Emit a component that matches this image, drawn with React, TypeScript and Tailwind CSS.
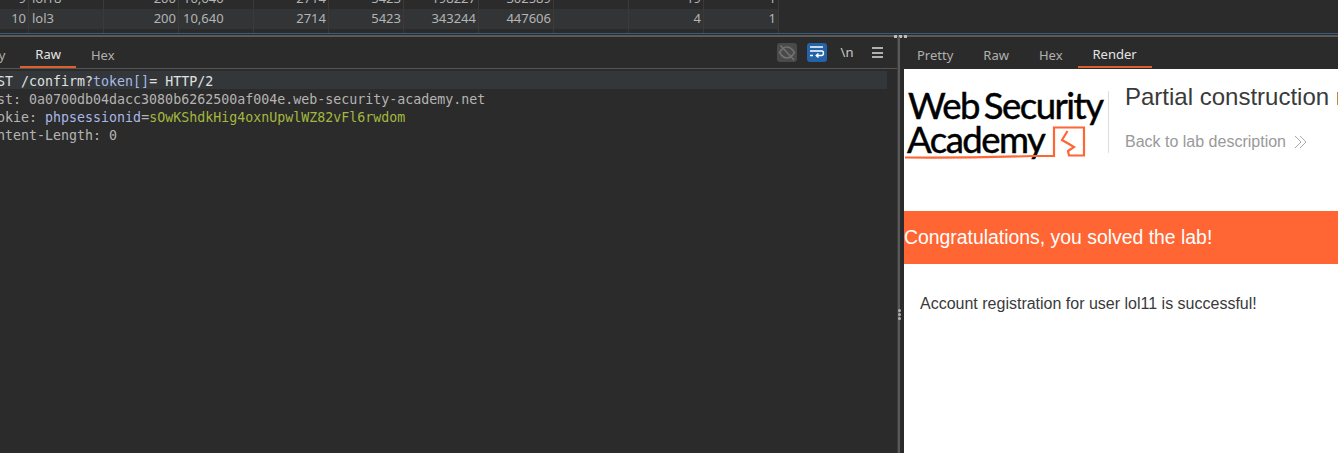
const sep = 'border-r border-[#3a3a3a]';

function Row({ cells, alt }: { cells: string[]; alt?: boolean }) {
  return (
    <div className={`flex h-5 w-[779px] items-center text-[13px] text-[#b4b4b4] ${alt ? 'bg-[#323436]' : 'bg-[#2b2b2b]'}`}>
      <div className={`h-full w-[29px] pr-[2px] text-right ${sep}`}>{cells[0]}</div>
      <div className={`h-full w-[75px] pl-[3px] ${sep}`}>{cells[1]}</div>
      <div className={`h-full w-[75px] pr-[2px] text-right ${sep}`}>{cells[2]}</div>
      <div className={`h-full w-[75px] pl-[4px] ${sep}`}>{cells[3]}</div>
      <div className={`h-full w-[75px] pr-[2px] text-right ${sep}`}>{cells[4]}</div>
      <div className={`h-full w-[75px] pr-[2px] text-right ${sep}`}>{cells[5]}</div>
      <div className={`h-full w-[75px] pr-[2px] text-right ${sep}`}>{cells[6]}</div>
      <div className={`h-full w-[75px] pr-[2px] text-right ${sep}`}>{cells[7]}</div>
      <div className={`h-full w-[75px] ${sep}`}></div>
      <div className={`h-full w-[75px] pr-[2px] text-right ${sep}`}>{cells[8]}</div>
      <div className={`h-full w-[75px] pr-[2px] text-right ${sep}`}>{cells[9]}</div>
    </div>
  );
}

function Tabs({ tabs, active, className }: { tabs: string[]; active: string; className?: string }) {
  return (
    <div className={`flex h-[32px] border-b border-[#555555] text-[13px] ${className ?? ''}`}>
      {tabs.map((t) => (
        <div
          key={t}
          className={`flex h-[31px] shrink-0 items-center px-[15px] pt-[6px] ${
            t === active ? 'border-b-2 border-[#d9622e] text-[#e4e4e4]' : 'text-[#b0b0b0]'
          }`}
        >
          {t}
        </div>
      ))}
    </div>
  );
}

function HiddenIcon() {
  return (
    <svg width="20" height="19" viewBox="0 0 20 19" fill="none" stroke="#727272" strokeWidth="1.5">
      <path d="M2.5 9.5C5 5.5 7.5 4 10 4s5 1.5 7.5 5.5C15 13.5 12.5 15 10 15s-5-1.5-7.5-5.5z" />
      <path d="M3.5 2.5l13.5 14.5" />
    </svg>
  );
}

function WrapIcon() {
  return (
    <svg width="20" height="19" viewBox="0 0 20 19" fill="none" stroke="#ffffff" strokeWidth="1.5">
      <path d="M3 4h13M3 8h12c2 0 2 4.5-.5 4.5H9.5M3 12.5h3" />
      <path d="M11.5 10.5l-2.2 2 2.2 2" />
    </svg>
  );
}

function Logo() {
  return (
    <div className="relative h-[100px] w-[204px] shrink-0 font-['Lato',sans-serif] text-[36.5px] leading-[34px] tracking-[-1.5px] text-black [-webkit-text-stroke:0.5px_black] [word-spacing:-3px]">
      <div className="whitespace-nowrap pl-[4px] pt-[19px]">Web Security</div>
      <div className="whitespace-nowrap pl-[3px]">Academy</div>
      <svg className="absolute left-0 top-0" width="204" height="100" viewBox="0 0 204 100" fill="none" stroke="#ff6633" strokeWidth="2.2">
        <path d="M1 88.5c45 .5 95-.5 130-1.500h19V58.500h30v28h-15l-1-4.500 6-4-5-3-7-4 5.500-9" />
      </svg>
    </div>
  );
}

export default function App() {
  return (
    <div className="flex h-[453px] w-[1338px] flex-col overflow-hidden bg-[#2b2b2b] font-['Noto_Sans',sans-serif]">
      {/* Table */}
      <div className="h-[33px] shrink-0 overflow-hidden">
        <div className="-mt-[11px]">
          <Row cells={['9', 'lol18', '200', '10,640', '2714', '5423', '198227', '302589', '19', '1']} />
          <Row alt cells={['10', 'lol3', '200', '10,640', '2714', '5423', '343244', '447606', '4', '1']} />
          <Row cells={['', '', '', '', '', '', '', '', '', '']} />
        </div>
      </div>
      <div className="h-px shrink-0 bg-[#3b5a80]"></div>
      <div className="h-px shrink-0 bg-[#2b2b2b]"></div>
      <div className="relative h-[2px] shrink-0 bg-[#5a5a5a]">
        <div className="absolute left-[894px] top-0 flex gap-[2px]">
          <span className="h-[3px] w-[3px] bg-[#bbbbbb]"></span>
          <span className="h-[3px] w-[3px] bg-[#bbbbbb]"></span>
          <span className="h-[3px] w-[3px] bg-[#bbbbbb]"></span>
        </div>
      </div>

      <div className="flex min-h-0 flex-1">
        {/* Request */}
        <div className="relative w-[898px] shrink-0 overflow-hidden border-r border-[#3c3c3c]">
          <Tabs className="-ml-[46px]" tabs={['Pretty', 'Raw', 'Hex']} active="Raw" />
          <div className="absolute right-[10px] top-[6px] flex items-center gap-[10px]">
            <div className="h-[19px] w-[20px] rounded-[3px] bg-[#4a4a4a]">
              <HiddenIcon />
            </div>
            <div className="h-[19px] w-[20px] rounded-[3px] bg-[#2563a8]">
              <WrapIcon />
            </div>
            <div className="flex h-[19px] w-[20px] items-center justify-center text-[13px] text-[#c8c8c8]">\n</div>
            <div className="flex h-[19px] w-[20px] flex-col items-center justify-center gap-[2.5px]">
              <span className="h-[2px] w-[11px] bg-[#b0b0b0]"></span>
              <span className="h-[2px] w-[11px] bg-[#b0b0b0]"></span>
              <span className="h-[2px] w-[11px] bg-[#b0b0b0]"></span>
            </div>
          </div>
          <div className="pt-[2px] font-['DejaVu_Sans_Mono',monospace] text-[13.3px] leading-[18px] text-[#b4b4b4]">
            <div className="-ml-[19px] mr-[10px] h-[18px] whitespace-pre bg-[#33373a] pt-[2px] text-[#e0e0e0]">
              POST /confirm?<span className="text-[#a9b7e6]">token[]</span>= HTTP/2
            </div>
            <div className="-ml-[19px] h-[18px] whitespace-pre pt-[2px]">Host: 0a0700db04dacc3080b6262500af004e.web-security-academy.net</div>
            <div className="-ml-[19px] h-[18px] whitespace-pre pt-[2px]">
              Cookie: <span className="text-[#a9b7e6]">phpsessionid</span>=<span className="text-[#a4b83f]">sOwKShdkHig4oxnUpwlWZ82vFl6rwdom</span>
            </div>
            <div className="-ml-[19px] h-[18px] whitespace-pre pt-[2px]">Content-Length: 0</div>
          </div>
        </div>

        {/* Splitter */}
        <div className="relative w-[6px] shrink-0 border-l-2 border-[#5a5a5a]">
          <div className="absolute -left-[2px] top-[272px] flex flex-col gap-[1px]">
            <span className="h-[3px] w-[3px] rounded-full bg-[#b0b0b0]"></span>
            <span className="h-[3px] w-[3px] rounded-full bg-[#b0b0b0]"></span>
            <span className="h-[3px] w-[3px] rounded-full bg-[#b0b0b0]"></span>
          </div>
        </div>

        {/* Response */}
        <div className="min-w-0 flex-1">
          <Tabs className="-ml-[2px] border-b-0" tabs={['Pretty', 'Raw', 'Hex', 'Render']} active="Render" />
          <div className="h-[384px] overflow-hidden bg-white font-['Liberation_Sans',sans-serif]">
            <div className="flex h-[142px]">
              <Logo />
              <div className="mt-[22px] h-[62px] w-px shrink-0 bg-[#dddddd]"></div>
              <div className="ml-[16px] min-w-0 flex-1 overflow-hidden whitespace-nowrap">
                <div className="pt-[12px] text-[24px] leading-[32px] text-[#3a3a3a]">Partial construction race conditions</div>
                <div className="mt-[17px] flex items-center gap-[8px] text-[16px] leading-[24px] text-[#999999]">
                  Back to lab description
                  <svg width="13" height="14" viewBox="0 0 13 14" fill="none" stroke="#aaaaaa" strokeWidth="1">
                    <path d="M1 1l6 6-6 6M6 1l6 6-6 6" />
                  </svg>
                </div>
              </div>
            </div>
            <div className="flex h-[53px] items-center bg-[#ff6633] text-[19.4px] text-white">Congratulations, you solved the lab!</div>
            <div className="px-4 pt-[28px] text-[16px] leading-[24px] text-[#3a3a3a]">Account registration for user lol11 is successful!</div>
          </div>
        </div>
      </div>
    </div>
  );
}
